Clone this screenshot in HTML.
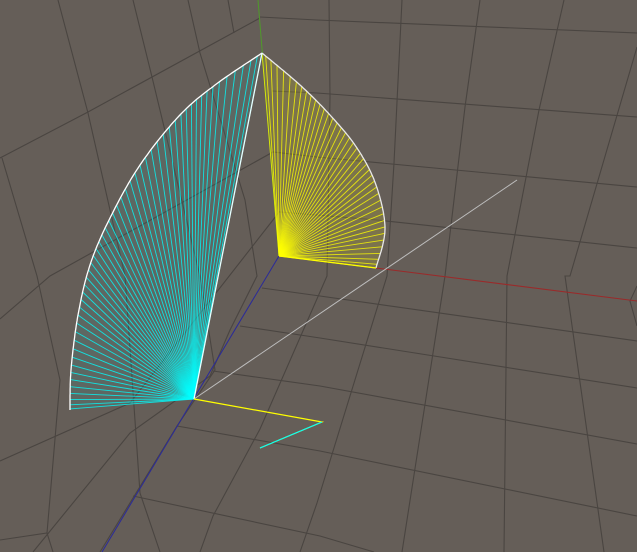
<!DOCTYPE html>
<html><head><meta charset="utf-8">
<style>html,body{margin:0;padding:0;background:#655e58;overflow:hidden}svg{display:block}</style>
</head><body>
<svg id="s" width="637" height="552" viewBox="0 0 637 552" xmlns="http://www.w3.org/2000/svg">
<rect width="637" height="552" fill="#655e58"/>
<g fill="none" stroke="#4a4541" stroke-width="1.1">
<polyline points="260,17 317,20 637,33"/>
<polyline points="0,158 88,112 260,18"/>
<polyline points="272,91 317,93 637,117"/>
<polyline points="0,319 50,276 273,152 317,157 637,187"/>
<polyline points="0,461 130,403 280,211"/>
<polyline points="280,212 377,220 637,248"/>
<polyline points="262,288 320,296 637,341"/>
<polyline points="240,326 320,338 637,388"/>
<polyline points="213,371 320,386 637,444"/>
<polyline points="177,426 320,451 637,516"/>
<polyline points="133,496 320,536 374,552"/>
<polyline points="329,0 330,97 327,276 260,429 213,516 200,552"/>
<polyline points="402,0 394,163 387,276 317,503 300,552"/>
<polyline points="480,0 465,107 445,276 402,552"/>
<polyline points="564,0 539,110 507,276 504,552"/>
<polyline points="637,47 570,276 565,276 604,552"/>
<polyline points="637,286 630,301 637,326"/>
<polyline points="58,0 88,113 125,276 140,493 160,552"/>
<polyline points="133,0 152,77 200,276 215,370 177,426 100,552"/>
<polyline points="188,0 200,53 245,200 257,276 230,330 210,376 130,433 33,552"/>
<polyline points="2,158 37,276 60,380 47,533"/>
<polyline points="0,540 47,533 53,552"/>
<polyline points="228,0 234,33"/>
</g>
<line x1="258" y1="0" x2="279" y2="256" stroke="#4f9a2a" stroke-width="1"/>
<line x1="279" y1="256" x2="102" y2="552" stroke="#2a2a9a" stroke-width="1"/>
<line x1="376" y1="268" x2="637" y2="301" stroke="#9a2a2a" stroke-width="1"/>
<line x1="194" y1="399" x2="517" y2="180" stroke="#bdbdbd" stroke-width="1"/>
<g id="fans"></g>
<polyline points="194,399 322,422 260,448" fill="none" stroke="#ffff00" stroke-width="1.2"/>
<line x1="322" y1="422" x2="260" y2="448" stroke="#00ffff" stroke-width="1.2"/>
</svg>
<script>
(function(){
var NS="http://www.w3.org/2000/svg",g=document.getElementById("fans");
function cat(pts,n){var out=[];for(var i=0;i<pts.length-1;i++){var p0=pts[Math.max(i-1,0)],p1=pts[i],p2=pts[i+1],p3=pts[Math.min(i+2,pts.length-1)];for(var k=0;k<n;k++){var t=k/n,t2=t*t,t3=t2*t;var f=function(a,b,c,d){return 0.5*((2*b)+(-a+c)*t+(2*a-5*b+4*c-d)*t2+(-a+3*b-3*c+d)*t3)};out.push([f(p0[0],p1[0],p2[0],p3[0]),f(p0[1],p1[1],p2[1],p3[1])]);}}out.push(pts[pts.length-1]);return out;}
function el(n,a){var e=document.createElementNS(NS,n);for(var k in a)e.setAttribute(k,a[k]);g.appendChild(e);return e;}
function fan(o,pts,col,fill,edge,n){
 var arc=cat(pts,20);
 var d="M"+o[0]+","+o[1]+" "+arc.map(function(p){return "L"+p[0].toFixed(1)+","+p[1].toFixed(1)}).join(" ")+"Z";
 el("path",{d:d,fill:fill,stroke:"none"});
 var step=Math.max(1,Math.round(arc.length/n));
 for(var i=0;i<arc.length;i+=step){el("line",{x1:o[0],y1:o[1],x2:arc[i][0].toFixed(1),y2:arc[i][1].toFixed(1),stroke:col,"stroke-width":0.9,"stroke-opacity":0.8});}
 el("polyline",{points:arc.map(function(p){return p[0].toFixed(1)+","+p[1].toFixed(1)}).join(" "),fill:"none",stroke:edge,"stroke-width":1.3});
}
fan([194,399],[[262,53],[215,85],[179,116],[140,165],[110,218],[90,265],[78,315],[71,370],[70,410]],"#00ffff","rgba(40,170,170,0.12)","#ffffff",48);
fan([279,256],[[262,53],[300,85],[330,115],[357,148],[376,185],[385,229],[376,268]],"#ffff00","rgba(190,180,40,0.25)","#e8e8e8",48);
el("line",{x1:262,y1:53,x2:194,y2:399,stroke:"#e8ffff","stroke-width":1.3});
el("line",{x1:279,y1:256,x2:376,y2:268,stroke:"#ffff00","stroke-width":1.3});
})();
</script>
</body></html>
